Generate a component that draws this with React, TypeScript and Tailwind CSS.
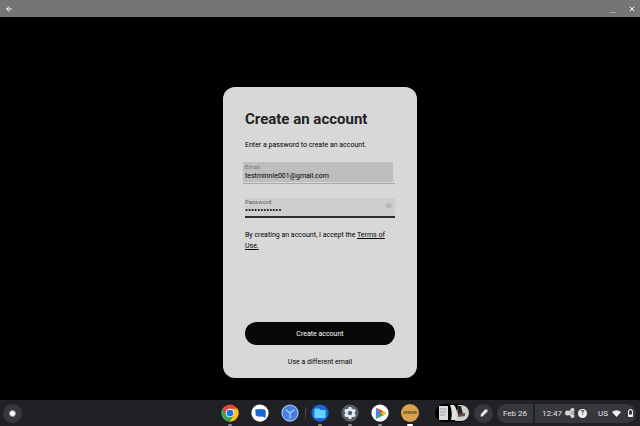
import type { ReactNode } from 'react';
import { ArrowLeft, X } from 'lucide-react';

function ChromeIcon() {
  return (
    <svg viewBox="0 0 48 48" className="size-[18px]" aria-hidden="true">
      <circle cx="24" cy="24" r="23" fill="#e8453c" />
      <path d="M4.1 12.5A23 23 0 0 0 24 47l10-17.5A11 11 0 0 1 14.5 29.5Z" fill="#34a853" />
      <path d="M24 47A23 23 0 0 0 43.9 12.5H24a11.5 11.5 0 0 1 10 17Z" fill="#fbc116" />
      <circle cx="24" cy="24" r="11.5" fill="#fff" />
      <circle cx="24" cy="24" r="9" fill="#1a73e8" />
    </svg>
  );
}

function MessagesIcon() {
  return (
    <svg viewBox="0 0 48 48" className="size-[18px]" aria-hidden="true">
      <circle cx="24" cy="24" r="23" fill="#fff" />
      <path d="M9 13h22a9 9 0 0 1 9 9v2a9 9 0 0 1-9 9H20c-5 0-7-4-7-9Z" fill="#8ab4f8" />
      <path d="M19 14h12a8 8 0 0 1 8 8v13c0 2-1 2-3 1l-5-3H20a8 8 0 0 1-8-8v-4a7 7 0 0 1 7-7Z" fill="#1967d2" />
    </svg>
  );
}

function ClockIcon() {
  return (
    <svg viewBox="0 0 48 48" className="size-[18px]" aria-hidden="true">
      <circle cx="24" cy="24" r="23" fill="#a9c7fa" />
      <circle cx="24" cy="24" r="20" fill="#4a7fe0" />
      <path d="M12 15l12 9 12-9M24 24v15" fill="none" stroke="#bcd2fb" strokeWidth="3" />
    </svg>
  );
}

function FilesIcon() {
  return (
    <svg viewBox="0 0 48 48" className="size-[18px]" aria-hidden="true">
      <circle cx="24" cy="24" r="23" fill="#1a66d9" />
      <path d="M12 12h10l4 4h10a3 3 0 0 1 3 3v15a3 3 0 0 1-3 3H12a3 3 0 0 1-3-3V15a3 3 0 0 1 3-3Z" fill="#63d3fb" />
    </svg>
  );
}

function SettingsIcon() {
  return (
    <svg viewBox="0 0 48 48" className="size-[18px]" aria-hidden="true">
      <circle cx="24" cy="24" r="23" fill="#5b6067" />
      <g fill="#e3ebf5">
        <circle cx="24" cy="24" r="12.5" />
        <rect x="20" y="8" width="8" height="32" rx="2" />
        <rect x="20" y="8" width="8" height="32" rx="2" transform="rotate(60 24 24)" />
        <rect x="20" y="8" width="8" height="32" rx="2" transform="rotate(120 24 24)" />
      </g>
      <circle cx="24" cy="24" r="6" fill="#4d6680" />
    </svg>
  );
}

function PlayIcon() {
  return (
    <svg viewBox="0 0 48 48" className="size-[18px]" aria-hidden="true">
      <circle cx="24" cy="24" r="23" fill="#fff" />
      <path d="M13 9v31l16-15Z" fill="#4285f4" />
      <path d="M13 9l22 11-7 6Z" fill="#ea4335" />
      <path d="M13 40l22-11-7-7Z" fill="#34a853" />
      <path d="M32 18l7 5q2 1.500 0 3l-7 5-6-6.500Z" fill="#fbbc04" />
    </svg>
  );
}

function BrandIcon() {
  return (
    <span className="flex size-[18px] items-center justify-center rounded-full bg-[#d9a04d] font-['Liberation_Serif',serif] text-[4px] leading-none font-bold text-[#2a1c0c]">
      SONOS
    </span>
  );
}

function ShelfApp({ label, running, active, children }: { label: string; running?: boolean; active?: boolean; children: ReactNode }) {
  return (
    <button type="button" aria-label={label} className="flex h-[26px] w-[30px] flex-col items-center pt-1">
      {children}
      <span
        className={
          active ? 'mt-0.5 h-0.5 w-1.5 rounded-full bg-white' : running ? 'mt-0.5 h-0.5 w-1 rounded-full bg-[#85878a]' : 'hidden'
        }
      />
    </button>
  );
}

function RecentFiles() {
  return (
    <svg viewBox="0 0 36 20" className="h-5 w-9" aria-hidden="true">
      <rect x="1" y="1" width="34" height="18" rx="9" fill="#000" />
      <rect x="5" y="3" width="9" height="14" fill="#dcdcda" />
      <path d="M6 6h6M6 9h6M6 12h5" stroke="#9a9a95" strokeWidth="1" />
      <path d="M16 2h4q4 4 3 15h-6q2-7-1-15Z" fill="#e2e2df" />
      <path d="M24 2h3a8 8 0 0 1 0 16h-6q3-8 3-16Z" fill="#d3d1d0" />
      <path d="M24 3h3l2 8h-5Z" fill="#292323" />
      <path d="M24 11l7-1v3l-7 1Z" fill="#6c4e48" />
    </svg>
  );
}

function ShareIcon() {
  return (
    <svg viewBox="0 0 20 20" className="size-2.5" fill="#d5d7d9" aria-hidden="true">
      <path d="M4 10l11-6M4 10l11 6M4 10h12" stroke="#d5d7d9" strokeWidth="3" />
      <circle cx="5" cy="10" r="5" />
      <circle cx="15" cy="4" r="4" />
      <circle cx="15" cy="16" r="4" />
      <circle cx="16" cy="10" r="3" fill="#a9abad" />
    </svg>
  );
}

export default function App() {
  return (
    <div className="flex h-screen flex-col bg-black font-[Roboto,sans-serif] text-black">
      <header className="flex h-[17px] shrink-0 items-center justify-between bg-[#757575] px-1 text-white">
        <button type="button" aria-label="Back" className="flex size-[9px] items-center justify-center">
          <ArrowLeft className="size-2" strokeWidth={3} />
        </button>
        <div className="flex items-center gap-3">
          <button type="button" aria-label="Minimize" className="flex size-2 justify-end items-end">
            <span className="h-px w-1.5 bg-[#a8a8a8]" />
          </button>
          <button type="button" aria-label="Close" className="flex size-2 items-center justify-center">
            <X className="size-2" strokeWidth={3} />
          </button>
        </div>
      </header>

      <main className="flex min-h-0 grow items-start justify-center pt-[70px]">
        <form
          onSubmit={(e) => e.preventDefault()}
          className="flex min-h-[291px] w-[194px] flex-col rounded-xl bg-[#d8d8d8] px-[22px] pt-[22px] pb-[10px] text-[7px] leading-[11px]"
        >
          <h1 className="text-[15px] leading-5 font-bold text-[#222]">Create an account</h1>
          <p className="mt-[11px]">Enter a password to create an account.</p>

          <div className="mt-[11px] -ml-0.5 border-b border-[#aaa] pb-px">
            <div className="mr-0.5 flex h-5 flex-col bg-[#bebebe] pt-px pl-0.5">
              <label htmlFor="email" className="text-[6px] leading-[8px] text-[#777]">Email</label>
              <input id="email" type="email" defaultValue="testminnie001@gmail.com" className="h-[11px] w-full bg-transparent text-[7px] leading-[11px] outline-none" />
            </div>
          </div>

          <div className="mt-[14px] flex h-5 items-start border-b-2 border-[#2f2f33] bg-[#cecece]">
            <div className="flex min-w-0 grow flex-col">
              <label htmlFor="password" className="text-[6px] leading-[7px] text-[#606060]">Password</label>
              <input id="password" type="password" defaultValue="minnie001abc" className="h-[10px] w-full bg-transparent text-[9px] leading-[10px] outline-none" />
            </div>
            <button type="button" aria-label="Show password" className="mt-[5px] mr-0.5 shrink-0">
              <svg viewBox="0 0 16 10" className="h-[5px] w-2" fill="none" stroke="#aaa" strokeWidth="2" aria-hidden="true">
                <path d="M1 5q7-8 14 0-7 8-14 0Z" />
                <circle cx="8" cy="5" r="2" />
              </svg>
            </button>
          </div>

          <p className="mt-3">
            By creating an account, I accept the{' '}
            <a href="#terms" className="underline">Terms of Use.</a>
          </p>

          <button type="submit" className="mt-auto h-[23px] shrink-0 rounded-full bg-[#080808] pt-px text-white">Create account</button>
          <button type="button" className="mt-3 h-[11px] self-center">Use a different email</button>
        </form>
      </main>

      <footer className="grid h-[26px] shrink-0 grid-cols-[1fr_auto_1fr] items-center bg-[#202125] text-[#e2e3e5]">
        <button type="button" aria-label="Launcher" className="ml-[3px] flex size-[19px] items-center justify-center rounded-full bg-[#37383b]">
          <span className="size-[7px] rounded-full border border-[#8c8c8c] bg-white" />
        </button>

        <nav aria-label="Apps" className="flex items-center">
          <ShelfApp label="Chrome" running><ChromeIcon /></ShelfApp>
          <ShelfApp label="Messages"><MessagesIcon /></ShelfApp>
          <ShelfApp label="Clock"><ClockIcon /></ShelfApp>
          <span className="-mr-px h-3 w-px bg-[#45464a]" />
          <ShelfApp label="Files" running><FilesIcon /></ShelfApp>
          <ShelfApp label="Settings" running><SettingsIcon /></ShelfApp>
          <ShelfApp label="Play Store" running><PlayIcon /></ShelfApp>
          <ShelfApp label="Sonos" active><BrandIcon /></ShelfApp>
        </nav>

        <div className="flex items-center justify-end pr-1 text-[8px] leading-[19px]">
          <button type="button" aria-label="Recent files" className="mr-1"><RecentFiles /></button>
          <button type="button" aria-label="Stylus tools" className="mr-1 flex size-[19px] items-center justify-center rounded-full bg-[#37383b]">
            <svg viewBox="0 0 16 16" className="size-2" fill="#e8e8e8" aria-hidden="true">
              <path d="M10 1h5v4L5 15H1l1-5Z" />
            </svg>
          </button>
          <button type="button" className="mr-0.5 h-[19px] w-9 rounded-l-full bg-[#37383b]">Feb 26</button>
          <button type="button" className="flex h-[19px] w-[101px] items-center rounded-r-full bg-[#37383b] pl-[7px]">
            <span className="w-[23px] text-left">12:47</span>
            <ShareIcon />
            <span className="ml-[3px] flex size-[9px] items-center justify-center rounded-full bg-[#f1f1f1] text-[7px] leading-none font-bold text-[#333]">?</span>
            <span className="ml-[11px] w-[14px] text-left">US</span>
            <svg viewBox="0 0 18 14" className="h-[7px] w-[9px]" fill="#f1f1f1" aria-hidden="true">
              <path d="M0 4q9-7 18 0L9 14Z" />
            </svg>
            <svg viewBox="0 0 10 16" className="ml-[7px] h-2 w-[5px]" aria-hidden="true">
              <path d="M3 1h4v2h2v12H1V3h2Z" fill="none" stroke="#f1f1f1" strokeWidth="2" />
              <path d="M1 11h8v4H1Z" fill="#f1f1f1" />
            </svg>
          </button>
        </div>
      </footer>
    </div>
  );
}
